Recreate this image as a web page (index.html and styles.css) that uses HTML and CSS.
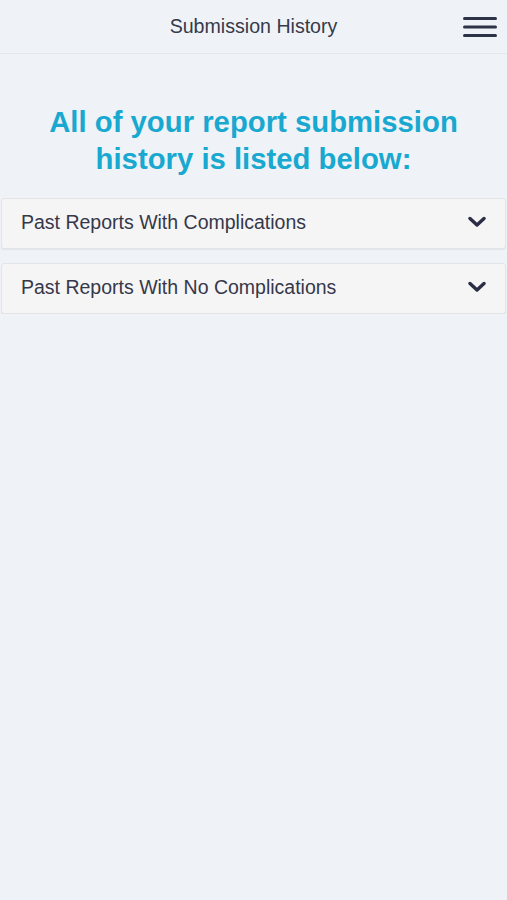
FILE: index.html
```html
<!DOCTYPE html>
<html>
<head>
<meta charset="utf-8">
<link rel="stylesheet" href="styles.css">
</head>
<body>
<header class="topbar">
  <div class="title">Submission History</div>
  <button class="menu" aria-label="Menu">
    <svg width="34" height="24" viewBox="0 0 34 24">
      <rect x="0" y="2" width="34" height="3" rx="1.5" fill="#2e3246"/>
      <rect x="0" y="10.5" width="34" height="3" rx="1.5" fill="#2e3246"/>
      <rect x="0" y="19" width="34" height="3" rx="1.5" fill="#2e3246"/>
    </svg>
  </button>
</header>
<main class="content">
  <h1 class="heading">All of your report submission<br>history is listed below:</h1>
  <div class="list">
    <div class="item">
      <span class="label">Past Reports With Complications</span>
      <svg class="chev" width="18" height="12" viewBox="0 0 18 12"><path d="M2 2.5 L9 9 L16 2.5" fill="none" stroke="#2b2d45" stroke-width="3.4" stroke-linecap="round" stroke-linejoin="round"/></svg>
    </div>
    <div class="item">
      <span class="label">Past Reports With No Complications</span>
      <svg class="chev" width="18" height="12" viewBox="0 0 18 12"><path d="M2 2.5 L9 9 L16 2.5" fill="none" stroke="#2b2d45" stroke-width="3.4" stroke-linecap="round" stroke-linejoin="round"/></svg>
    </div>
  </div>
</main>
</body>
</html>
```
FILE: styles.css
```css
html, body {
  margin: 0;
  padding: 0;
  background: #eff3f7;
  font-family: "Liberation Sans", Arial, sans-serif;
  color: #333747;
}
.topbar {
  position: relative;
  height: 53px;
  border-bottom: 1px solid #e3e6ea;
  display: flex;
  align-items: center;
  justify-content: center;
}
.title {
  font-size: 19.6px;
  color: #363a4b;
}
.menu {
  position: absolute;
  right: 10px;
  top: 15px;
  background: none;
  border: 0;
  padding: 0;
  width: 34px;
  height: 24px;
  display: block;
}
.menu svg { display: block; }
.content {
  padding: 0 1px;
}
.heading {
  margin: 49px 0 21px;
  text-align: center;
  font-size: 29.3px;
  line-height: 37px;
  font-weight: bold;
  color: #18a8d0;
}
.list {
  display: flex;
  flex-direction: column;
  gap: 14px;
}
.item {
  height: 51px;
  box-sizing: border-box;
  background: #f5f5f6;
  border: 1px solid #e2e4e7;
  border-radius: 3px;
  box-shadow: 0 1px 1px rgba(0,0,0,0.06);
  display: flex;
  align-items: center;
  justify-content: space-between;
  padding: 0 19px 0 19px;
}
.label {
  font-size: 19.5px;
  color: #353849;
  margin-top: -3px;
}
.chev {
  display: block;
  margin-top: -4px;
}
```
